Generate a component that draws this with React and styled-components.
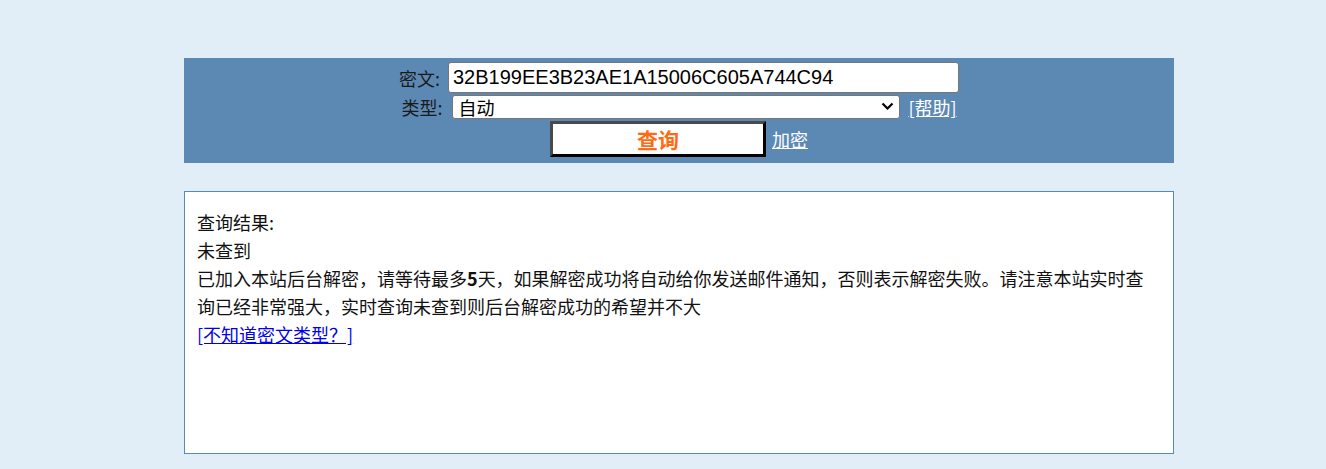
import React, { useState } from 'react';
import styled, { createGlobalStyle } from 'styled-components';

const GlobalStyle = createGlobalStyle`
  html, body {
    margin: 0;
    padding: 0;
    background: #e1eef8;
  }
  body {
    font-family: "Noto Sans CJK SC", "Liberation Sans", sans-serif;
    color: #111;
  }
`;

const Page = styled.div`
  width: 990px;
  margin: 0 0 0 184px;
  padding-top: 58px;
`;

const QueryBar = styled.form`
  background: #5c89b4;
  padding: 4px 0 6px;
  display: flex;
  flex-direction: column;
  align-items: center;
  gap: 2px;
`;

const Row = styled.div`
  display: flex;
  align-items: center;
  justify-content: center;
  gap: ${props => props.gap || 8}px;
  height: ${props => props.h}px;
`;

const Label = styled.span`
  font-size: 18px;
  line-height: 22px;
  color: #1a1a1a;
`;

const CipherInput = styled.input`
  box-sizing: border-box;
  width: 511px;
  height: 31px;
  border: 1px solid #767676;
  border-radius: 3px;
  padding: 0 4px;
  font-family: "Liberation Sans", Arial, sans-serif;
  font-size: 20px;
  color: #000;
  background: #fff;
  outline: none;
`;

const SelectWrap = styled.div`
  position: relative;
  margin-left: 2px;
  width: 448px;
  height: 24px;
`;

const TypeSelect = styled.select`
  appearance: none;
  box-sizing: border-box;
  width: 100%;
  height: 100%;
  border: 1px solid #767676;
  border-radius: 3px;
  font-family: "Noto Sans CJK SC", sans-serif;
  font-size: 18px;
  line-height: 22px;
  background: #fff;
  color: #000;
  padding: 0 26px 0 5px;
  outline: none;
`;

const Chevron = styled.svg`
  position: absolute;
  right: 6px;
  top: 7px;
  width: 13px;
  height: 9px;
  pointer-events: none;
`;

const BarLink = styled.a`
  color: #fff;
  font-size: 18px;
  line-height: 22px;
  text-decoration: underline;
  cursor: pointer;
`;

const SubmitButton = styled.button`
  box-sizing: border-box;
  width: 216px;
  height: 36px;
  background: #fff;
  border-style: solid;
  border-width: 3px;
  border-color: #4a4a4a #000 #000 #4a4a4a;
  color: #ff6a13;
  font-family: "Noto Sans CJK SC", sans-serif;
  font-weight: bold;
  font-size: 21px;
  line-height: 1;
  padding: 0;
  cursor: pointer;
`;

const ResultBox = styled.div`
  box-sizing: border-box;
  margin-top: 28px;
  height: 263px;
  background: #fff;
  border: 1px solid #5c89b4;
  padding: 16px 12px;
  font-size: 18px;
  line-height: 28px;
  color: #111;
`;

const Strong = styled.span`
  font-weight: bold;
`;

const HelpLink = styled.a`
  color: #0000ee;
  text-decoration: underline;
  cursor: pointer;
`;

export default function App() {
  const [cipher, setCipher] = useState('32B199EE3B23AE1A15006C605A744C94');
  const [type, setType] = useState('auto');

  return (
    <>
      <GlobalStyle />
      <Page>
        <QueryBar onSubmit={e => e.preventDefault()}>
          <Row h={31}>
            <Label>密文:</Label>
            <CipherInput value={cipher} onChange={e => setCipher(e.target.value)} />
          </Row>
          <Row h={24} gap={8}>
            <Label>类型:</Label>
            <SelectWrap>
              <TypeSelect value={type} onChange={e => setType(e.target.value)}>
                <option value="auto">自动</option>
                <option value="md5">md5</option>
                <option value="sha1">sha1</option>
              </TypeSelect>
              <Chevron viewBox="0 0 13 9">
                <path d="M1.5 1.5 L6.5 6.5 L11.5 1.5" fill="none" stroke="#000" strokeWidth="2.2" />
              </Chevron>
            </SelectWrap>
            <BarLink>[帮助]</BarLink>
          </Row>
          <Row h={36} gap={6}>
            <SubmitButton type="submit">查询</SubmitButton>
            <BarLink>加密</BarLink>
          </Row>
        </QueryBar>

        <ResultBox>
          <div>查询结果:</div>
          <div>未查到</div>
          <div>
            已加入本站后台解密，请等待最多<Strong>5</Strong>天，如果解密成功将自动给你发送邮件通知，否则表示解密失败。请注意本站实时查询已经非常强大，实时查询未查到则后台解密成功的希望并不大
          </div>
          <HelpLink>[不知道密文类型？]</HelpLink>
        </ResultBox>
      </Page>
    </>
  );
}
